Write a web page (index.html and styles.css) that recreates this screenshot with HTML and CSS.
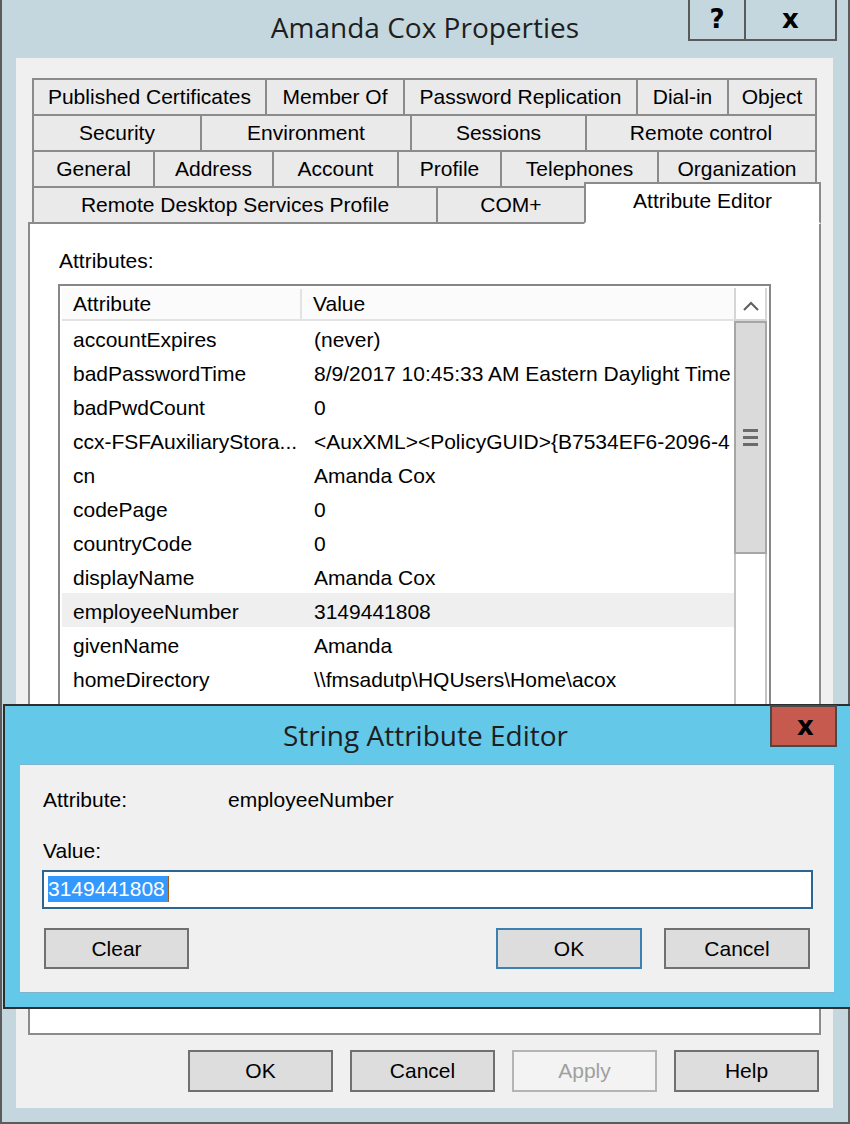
FILE: index.html
```html
<!DOCTYPE html>
<html lang="en">
<head>
    <meta charset="UTF-8">
    <meta name="viewport" content="width=device-width, initial-scale=1.0">
    <title>Amanda Cox Properties</title>
    <link rel="stylesheet" href="styles.css">
</head>
<body>
    <div class="window">
        <div class="titlebar">
            Amanda Cox Properties
            <div class="caption-buttons">
                <div class="caption-help">?</div>
                <div class="caption-close">x</div>
            </div>
        </div>

        <div class="client">
            <div class="tabs">
                <div class="tab-row row-1">
                    <div class="tab">Published Certificates</div>
                    <div class="tab">Member Of</div>
                    <div class="tab">Password Replication</div>
                    <div class="tab">Dial-in</div>
                    <div class="tab">Object</div>
                </div>
                <div class="tab-row row-2">
                    <div class="tab">Security</div>
                    <div class="tab">Environment</div>
                    <div class="tab">Sessions</div>
                    <div class="tab">Remote control</div>
                </div>
                <div class="tab-row row-3">
                    <div class="tab">General</div>
                    <div class="tab">Address</div>
                    <div class="tab">Account</div>
                    <div class="tab">Profile</div>
                    <div class="tab">Telephones</div>
                    <div class="tab">Organization</div>
                </div>
                <div class="tab-row row-4">
                    <div class="tab">Remote Desktop Services Profile</div>
                    <div class="tab">COM+</div>
                    <div class="tab active">Attribute Editor</div>
                </div>
            </div>

            <div class="panel">
                <div class="panel-label">Attributes:</div>
                <div class="listbox">
                    <div class="list">
                        <div class="list-header">
                            <div class="col-name">Attribute</div>
                            <div class="col-value">Value</div>
                        </div>
                        <div class="list-row"><div class="col-name">accountExpires</div><div class="col-value">(never)</div></div>
                        <div class="list-row"><div class="col-name">badPasswordTime</div><div class="col-value">8/9/2017 10:45:33 AM Eastern Daylight Time</div></div>
                        <div class="list-row"><div class="col-name">badPwdCount</div><div class="col-value">0</div></div>
                        <div class="list-row"><div class="col-name">ccx-FSFAuxiliaryStora...</div><div class="col-value">&lt;AuxXML&gt;&lt;PolicyGUID&gt;{B7534EF6-2096-4</div></div>
                        <div class="list-row"><div class="col-name">cn</div><div class="col-value">Amanda Cox</div></div>
                        <div class="list-row"><div class="col-name">codePage</div><div class="col-value">0</div></div>
                        <div class="list-row"><div class="col-name">countryCode</div><div class="col-value">0</div></div>
                        <div class="list-row"><div class="col-name">displayName</div><div class="col-value">Amanda Cox</div></div>
                        <div class="list-row selected"><div class="col-name">employeeNumber</div><div class="col-value">3149441808</div></div>
                        <div class="list-row"><div class="col-name">givenName</div><div class="col-value">Amanda</div></div>
                        <div class="list-row"><div class="col-name">homeDirectory</div><div class="col-value">\\fmsadutp\HQUsers\Home\acox</div></div>
                    </div>
                    <div class="scrollbar">
                        <div class="scroll-up">
                            <svg width="29" height="31" viewBox="0 0 29 31">
                                <polyline points="8,22 15,15 22,22" fill="none" stroke="#5e5e5e" stroke-width="2"/>
                            </svg>
                        </div>
                        <div class="scroll-thumb"><span></span><span></span><span></span></div>
                        <div class="scroll-track"></div>
                    </div>
                </div>
            </div>

            <div class="button-row">
                <button class="button">OK</button>
                <button class="button">Cancel</button>
                <button class="button disabled">Apply</button>
                <button class="button">Help</button>
            </div>
        </div>

        <!-- modal editor on top of the properties window -->
        <div class="editor">
            <div class="editor-titlebar">
                String Attribute Editor
                <div class="editor-close">x</div>
            </div>
            <div class="editor-client">
                <div class="editor-attr">
                    <span>Attribute:</span>
                    <span>employeeNumber</span>
                </div>
                <div class="editor-label">Value:</div>
                <div class="editor-input"><span class="selected">3149441808</span></div>
                <div class="editor-buttons">
                    <button class="button clear">Clear</button>
                    <button class="button default">OK</button>
                    <button class="button cancel">Cancel</button>
                </div>
            </div>
        </div>
    </div>
</body>
</html>
```

FILE: styles.css
```css
body {
    margin: 0;
    width: 850px;
    height: 1124px;
    overflow: hidden;
    font-family: "Liberation Sans", Arial, sans-serif;
    font-size: 21px;
    color: #000;
    background-color: #c5d7de;
}

.window {
    position: relative;
    box-sizing: border-box;
    height: 1124px;
    border-left: 2px solid #5c5c5c;
    border-right: 2px solid #5c5c5c;
    border-bottom: 2px solid #5c5c5c;
    background-color: #c5d7de;
}

.titlebar {
    position: relative;
    height: 58px;
    line-height: 54px;
    text-align: center;
    font-family: "Open Sans", sans-serif;
    font-size: 28px;
    color: #1e1e1e;
}

.caption-buttons {
    position: absolute;
    top: 0;
    right: 11px;
    display: flex;
    height: 41px;
    box-sizing: border-box;
    border: 2px solid #5a5a5a;
    border-top: none;
    font: bold 26px/39px "DejaVu Sans", sans-serif;
    color: #000;
}
.caption-help {
    width: 54px;
    border-right: 2px solid #5a5a5a;
    text-align: center;
}
.caption-close {
    width: 89px;
    text-align: center;
}

.client {
    margin: 0 15px 0 14px;
    height: 1050px;
    box-sizing: border-box;
    padding-top: 20px;
    background-color: #f0f0f0;
}

/* tabs, 4 rows */
.tabs {
    margin-left: 16px;
    width: 789px;
}
.tab-row {
    display: grid;
    height: 36px;
}
.row-1 { grid-template-columns: 233px 138px 233px 91px 90px; }
.row-2 { grid-template-columns: 168px 210px 175px 232px; }
.row-3 { grid-template-columns: 121px 119px 125px 103px 157px 160px; }
.row-4 { grid-template-columns: 404px 148px 237px; }

.tab {
    margin: 0 -2px -2px 0;
    border: 2px solid #8b8b8b;
    background-color: #eaeaea;
    text-align: center;
    line-height: 34px;
    white-space: nowrap;
}
.tab:last-child {
    margin-right: 0;
}
.tab.active {
    position: relative;
    z-index: 1;
    margin-top: -4px;
    background-color: #fff;
    border-bottom-color: #fff;
}

.panel {
    margin-left: 12px;
    width: 793px;
    height: 813px;
    box-sizing: border-box;
    border: 2px solid #8b8b8b;
    background-color: #fff;
    padding: 25px 0 0 28px;
}
.panel-label {
    padding-left: 1px;
    line-height: 24px;
}

.listbox {
    display: flex;
    margin-top: 11px;
    width: 713px;
    height: 706px;
    box-sizing: border-box;
    border: 2px solid #868686;
    padding: 2px;
    overflow: hidden;
}
.list {
    flex: 1;
    overflow: hidden;
}
.list-header {
    display: flex;
    height: 33px;
    box-sizing: border-box;
    padding-top: 1px;
    border-bottom: 2px solid #e3e3e3;
    background-color: #fbfbfb;
    line-height: 30px;
}
.list-row {
    display: flex;
    height: 34px;
    box-sizing: border-box;
    padding-top: 4px;
    line-height: 30px;
}
.list-row.selected {
    background-color: #efefef;
}
.col-name {
    width: 240px;
    flex-shrink: 0;
    box-sizing: border-box;
    padding-left: 11px;
    white-space: nowrap;
    overflow: hidden;
}
.col-value {
    flex: 1;
    padding-left: 12px;
    white-space: nowrap;
    overflow: hidden;
}
.list-header .col-name {
    border-right: 2px solid #e3e3e3;
}
.list-header .col-value {
    padding-left: 11px;
}

.scrollbar {
    display: flex;
    flex-direction: column;
    width: 33px;
}
.scroll-up {
    height: 33px;
    box-sizing: border-box;
    border: 2px solid #d6d6d6;
    border-top: none;
}
.scroll-up svg {
    display: block;
}
.scroll-thumb {
    display: flex;
    flex-direction: column;
    align-items: center;
    justify-content: center;
    gap: 4px;
    height: 233px;
    box-sizing: border-box;
    border: 2px solid #a6a6a6;
    background-color: #dadada;
}
.scroll-thumb span {
    width: 15px;
    height: 3px;
    background-color: #6b6b6b;
}
.scroll-track {
    flex: 1;
    border-left: 2px solid #c3c3c3;
    border-right: 2px solid #c3c3c3;
}

.button-row {
    display: flex;
    justify-content: flex-end;
    gap: 17px;
    margin-top: 15px;
    padding-right: 14px;
}

.button {
    width: 145px;
    height: 42px;
    box-sizing: border-box;
    padding: 0;
    border: 2px solid #707070;
    border-radius: 0;
    background-color: #dddddd;
    font: inherit;
    color: #000;
    text-align: center;
}
.button.disabled {
    border-color: #b4b4b4;
    background-color: #f3f3f3;
    color: #a0a0a0;
}

/* String Attribute Editor */
.editor {
    position: absolute;
    left: 1px;
    top: 704px;
    display: flex;
    flex-direction: column;
    width: 847px;
    height: 305px;
    box-sizing: border-box;
    border: 2px solid #2e2e2e;
    border-right: none;
    background-color: #64c8e9;
}
.editor-titlebar {
    position: relative;
    height: 58px;
    padding-right: 4px;
    line-height: 58px;
    text-align: center;
    font-family: "Open Sans", sans-serif;
    font-size: 28px;
    color: #1e1e1e;
}
.editor-close {
    position: absolute;
    top: -1px;
    left: 765px;
    width: 67px;
    height: 42px;
    box-sizing: border-box;
    padding-left: 4px;
    border: 2px solid #494949;
    background-color: #c65a4f;
    font: bold 26px/38px "DejaVu Sans", sans-serif;
    color: #000;
    text-align: center;
}
.editor-client {
    margin: 0 16px 14px 15px;
    height: 229px;
    box-sizing: border-box;
    padding: 23px 21px 0 22px;
    border-top: 1px solid #7fb5cc;
    border-bottom: 1px solid #7fb5cc;
    background-color: #f0f0f0;
}
.editor-attr {
    display: grid;
    grid-template-columns: 185px auto;
    padding-left: 1px;
    line-height: 24px;
}
.editor-label {
    margin-top: 27px;
    padding-left: 1px;
    line-height: 24px;
}
.editor-input {
    margin-top: 7px;
    height: 39px;
    box-sizing: border-box;
    padding: 4px;
    border: 2px solid #2c6592;
    background-color: #fff;
    line-height: 26px;
}
.editor-input .selected {
    display: inline-block;
    padding-right: 3px;
    border-right: 1px solid #a85a12;
    background-color: #3399ff;
    color: #fff;
}
.editor-buttons {
    display: flex;
    margin-top: 19px;
    padding-right: 3px;
}
.editor-buttons .button {
    height: 41px;
}
.button.clear {
    margin-left: 2px;
}
.button.default {
    width: 146px;
    margin-left: auto;
    border-color: #3c7fb1;
}
.button.cancel {
    width: 146px;
    margin-left: 22px;
}
```
